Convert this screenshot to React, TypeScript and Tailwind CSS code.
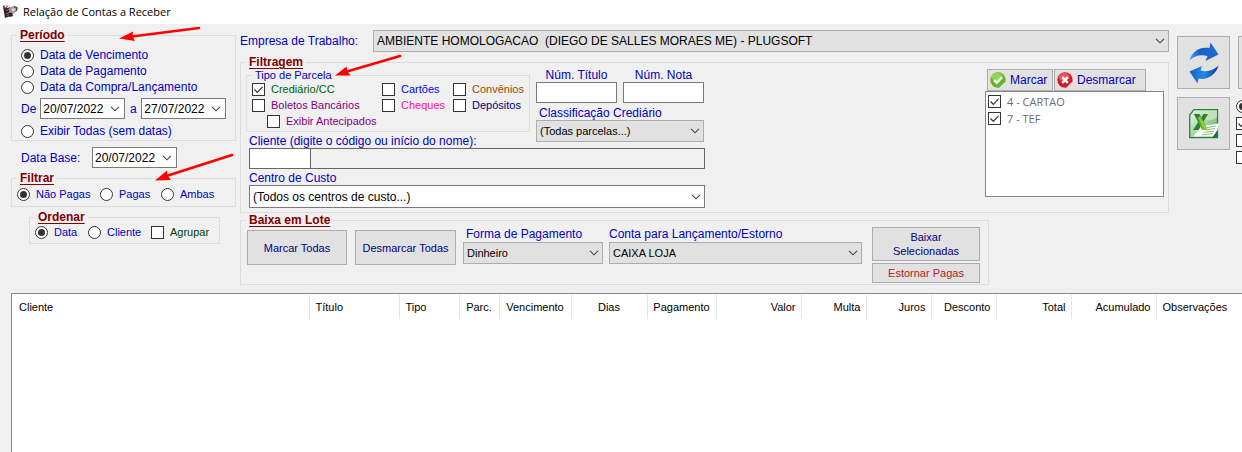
import React, { useState } from "react";

interface ToggleProps {
  label: string;
  checked?: boolean;
  name?: string;
  className?: string;
  hideLabel?: boolean;
}

interface SelectProps {
  id: string;
  value: string;
  className?: string;
  label?: string;
}

const Chevron = () => (
  <svg
    viewBox="0 0 10 6"
    className="pointer-events-none absolute right-1 top-1/2 h-1.5 w-2.5 -translate-y-1/2"
    fill="none"
    stroke="#444"
    strokeWidth="1.1"
  >
    <path d="M1 .8l4 4 4-4" />
  </svg>
);

const Radio = ({ label, checked, name, className = "", hideLabel }: ToggleProps) => (
  <label className={`flex items-center gap-1.5 whitespace-nowrap ${className}`}>
    <span className="relative size-[13px] shrink-0">
      <input
        type="radio"
        name={name}
        defaultChecked={checked}
        aria-label={hideLabel ? label : undefined}
        className="peer block size-[13px] appearance-none rounded-full border border-[#333] bg-white"
      />
      <span className="pointer-events-none absolute inset-[3px] hidden rounded-full bg-[#333] peer-checked:block" />
    </span>
    {!hideLabel && label}
  </label>
);

const Check = ({ label, checked, className = "", hideLabel }: ToggleProps) => (
  <label className={`flex items-center gap-1.5 whitespace-nowrap ${className}`}>
    <span className="relative size-[13px] shrink-0">
      <input
        type="checkbox"
        defaultChecked={checked}
        aria-label={hideLabel ? label : undefined}
        className="peer block size-[13px] appearance-none border border-[#333] bg-white"
      />
      <svg
        viewBox="0 0 13 13"
        className="pointer-events-none absolute inset-0 hidden size-[13px] peer-checked:block"
        fill="none"
        stroke="#333"
        strokeWidth="1.2"
      >
        <path d="M2.5 6.5l2.8 2.8 5.2-5.4" />
      </svg>
    </span>
    {!hideLabel && label}
  </label>
);

const Select = ({ id, value, className = "", label }: SelectProps) => (
  <div className={`relative ${className}`}>
    <select
      id={id}
      aria-label={label}
      className="block size-full appearance-none border border-inherit bg-inherit pl-[3px] pr-5 text-black"
    >
      <option>{value}</option>
    </select>
    <Chevron />
  </div>
);

const DateField = ({ value, label }: { value: string; label: string }) => {
  const [date, setDate] = useState(value);
  return (
    <div className="relative h-[21px] w-[85px] border border-[#7a7a7a] bg-white">
      <input
        type="text"
        aria-label={label}
        value={date}
        onChange={(e) => setDate(e.target.value)}
        className="block h-full w-[64px] pl-0.5 text-xs text-black"
      />
      <button type="button" aria-label="Abrir calendário" className="absolute inset-y-0 right-0 w-[18px]">
        <Chevron />
      </button>
    </div>
  );
};

const Group = ({
  title,
  className = "",
  children,
}: {
  title: string;
  className?: string;
  children: React.ReactNode;
}) => (
  <fieldset className={`min-w-0 border border-[#dcdcdc] ${className}`}>
    <legend className="ml-[5px] px-[3px] text-xs font-bold leading-[14px] text-[#800000] underline underline-offset-2">
      {title}
    </legend>
    {children}
  </fieldset>
);

const Arrows = () => (
  <svg
    aria-hidden="true"
    viewBox="0 0 420 200"
    className="pointer-events-none absolute left-0 top-0 h-[200px] w-[420px]"
    fill="#f00"
    stroke="#f00"
    strokeLinecap="round"
  >
    <g strokeWidth="2.6">
      <path d="M199 28L132 36.500M400 56L347 71.500M232 155L168 175.500" />
    </g>
    <g stroke="none">
      <path d="M119 38.500L133 31.500 132.500 36.500 135 41z" />
      <path d="M335 75.500L346.500 66.500 347.500 71.500 350.500 75.500z" />
      <path d="M155 180.500L167 170.500 167.500 175.500 171 180z" />
    </g>
  </svg>
);

const AppIcon = () => (
  <svg viewBox="0 0 16 14" className="h-3.5 w-4">
    <path d="M0 1l5 2 2-1 1 9-6 2z" fill="#2b2528" />
    <path d="M1 2l3 1M3 6l3-2M3 9l4-2M4 11l3-2" stroke="#8b7d82" />
    <path d="M6 3l5-2 4 1-1 4-3 2-3 2-2-2z" fill="#9c8d92" />
    <path d="M6 8l3 0 1 3-3 1z" fill="#201a1d" />
    <path d="M8 4l3-1 2 2-3 2z" fill="#ddd0d4" />
    <path d="M11 1.500l3 1.500-1 3" fill="none" stroke="#3d3337" />
    <path d="M1 0v4M3 1l2 .5" stroke="#d32033" />
  </svg>
);

const BadgeIcon = ({ ok }: { ok?: boolean }) => (
  <svg viewBox="0 0 16 16" className="size-4 shrink-0">
    <circle cx="8" cy="8" r="7.700" fill={ok ? "#62b52c" : "#cf2028"} />
    <ellipse cx="7" cy="5" rx="5.500" ry="4" fill={ok ? "#8fd452" : "#ea5559"} />
    <path d="M9.500 15.500l5.500-5.500.5 1.500-4.500 4.500z" fill="#e8e8e8" />
    {ok ? (
      <path d="M4 8.200l2.800 2.700L12 5.300" fill="none" stroke="#fff" strokeWidth="2.400" />
    ) : (
      <path d="M5.200 5.200l5.600 5.600M10.800 5.200l-5.600 5.600" stroke="#fff" strokeWidth="2.600" />
    )}
  </svg>
);

const RefreshIcon = () => (
  <svg viewBox="0 0 30 42" className="h-[42px] w-[30px]">
    <defs>
      <linearGradient id="blueTop" x1="0" x2="1">
        <stop offset="0" stopColor="#49a8ea" />
        <stop offset=".35" stopColor="#1761c6" />
        <stop offset="1" stopColor="#1f6bd0" />
      </linearGradient>
      <linearGradient id="blueBottom" x1="0" x2="1">
        <stop offset="0" stopColor="#1560c8" />
        <stop offset=".5" stopColor="#2489e6" />
        <stop offset="1" stopColor="#123a94" />
      </linearGradient>
    </defs>
    <path d="M.5 18.500C3 9 11 4.500 20.500 6L21.500.5 29.500 12.500 16.500 19 18.500 14C11 12 5 14 .5 18.500z" fill="url(#blueTop)" />
    <path d="M29.500 23.500C27 33 18 38.500 9.500 36.500L8.500 41.500.5 29.500 13 24 11.500 28.500C18 30.500 25 28 29.500 23.500z" fill="url(#blueBottom)" />
  </svg>
);

const ExcelIcon = () => (
  <svg viewBox="0 0 30 30" className="size-[30px]">
    <defs>
      <linearGradient id="sheet" x1="0" y1="0" x2="1" y2="1">
        <stop offset="0" stopColor="#f0faed" />
        <stop offset=".5" stopColor="#a5d6a3" />
        <stop offset="1" stopColor="#4ba75b" />
      </linearGradient>
      <linearGradient id="cross" x1="0" y1="0" x2="1" y2="1">
        <stop offset="0" stopColor="#1b6b32" />
        <stop offset="1" stopColor="#8ccc34" />
      </linearGradient>
    </defs>
    <path d="M5 .7h23.500v28H.7V6z" fill="url(#sheet)" stroke="#2b8541" strokeWidth="1.300" />
    <path d="M16 1.500h12v7C22 12 16 12 12 8z" fill="#c5e6c1" opacity=".8" />
    <path d="M13 17l17-2.500-3 13H4z" fill="#fff" />
    <path d="M18 18.500l9-1.500M17 21l9-1.500M15 23.500l10-1.500M13 26l11-1.500" stroke="#86bd85" strokeWidth="1.200" />
    <path d="M14.500 5H19L9.500 21H4z" fill="#27803b" />
    <path d="M5 5h5.500l8.500 16h-6z" fill="url(#cross)" />
    <path d="M9 9l2-2 7 13-3 .5z" fill="#8ccc34" />
    <path d="M23 29h5.500v-8z" fill="#167038" />
  </svg>
);

const columns = [
  { title: "Cliente", style: "w-[297px] pl-[7px] text-left" },
  { title: "Título", style: "w-[90px] pl-1.5 text-left" },
  { title: "Tipo", style: "w-[60px] pl-1.5 text-left" },
  { title: "Parc.", style: "w-[40px] px-0 text-center" },
  { title: "Vencimento", style: "w-[72px] px-0 text-center" },
  { title: "Dias", style: "w-[76px] px-0 text-center" },
  { title: "Pagamento", style: "w-[69px] px-0 text-center" },
  { title: "Valor", style: "w-[85px] pr-[5px] text-right" },
  { title: "Multa", style: "w-[65px] pr-[5px] text-right" },
  { title: "Juros", style: "w-[65px] pr-[5px] text-right" },
  { title: "Desconto", style: "w-[65px] pr-[5px] text-right" },
  { title: "Total", style: "w-[75px] pr-[5px] text-right" },
  { title: "Acumulado", style: "w-[85px] pr-[5px] text-right" },
  { title: "Observações", style: "pl-1.5 text-left" },
];

const btn = "border border-[#adadad] bg-[#e1e1e1]";

const Sidebar = () => (
  <aside className="flex w-[225px] shrink-0 flex-col pt-1">
    <Group title="Período">
      <div className="flex flex-col pb-px pl-[9px] pt-[5px]">
        <Radio name="periodo" label="Data de Vencimento" checked className="h-4" />
        <Radio name="periodo" label="Data de Pagamento" className="h-4" />
        <Radio name="periodo" label="Data da Compra/Lançamento" className="h-4" />
        <div className="flex items-center gap-1 pb-1 pt-[3px]">
          De
          <DateField value="20/07/2022" label="Data inicial" />
          <span className="w-2 text-center">a</span>
          <DateField value="27/07/2022" label="Data final" />
        </div>
        <Radio name="periodo" label="Exibir Todas (sem datas)" className="h-4" />
      </div>
    </Group>
    <div className="mt-1.5 flex items-center gap-2 pl-2.5">
      <span className="w-[63px]">Data Base:</span>
      <DateField value="20/07/2022" label="Data Base" />
    </div>
    <Group title="Filtrar" className="mt-[3px]">
      <div className="grid grid-cols-[83px_61px_1fr] pb-[5px] pl-[5px] pt-0.5 text-[11px] leading-[14px]">
        <Radio name="filtrar" label="Não Pagas" checked />
        <Radio name="filtrar" label="Pagas" />
        <Radio name="filtrar" label="Ambas" />
      </div>
    </Group>
    <Group title="Ordenar" className="ml-[18px] mr-4 mt-[3px]">
      <div className="grid grid-cols-[53px_63px_1fr] pb-1 pl-[5px] pt-px text-[11px] leading-[14px]">
        <Radio name="ordenar" label="Data" checked />
        <Radio name="ordenar" label="Cliente" />
        <Check label="Agrupar" className="text-[#004000]" />
      </div>
    </Group>
  </aside>
);

const Filters = () => (
  <Group title="Filtragem" className="mt-[3px]">
    <div className="flex items-start justify-between pl-[5px] pr-1">
      <div className="w-[459px] shrink-0 pb-1">
        <div className="flex gap-1.5">
          <div className="w-[284px]">
            <fieldset className="min-w-0 border border-[#dcdcdc]">
              <legend className="ml-[5px] px-[3px] text-[11px] leading-3">Tipo de Parcela</legend>
              <div className="grid auto-rows-[16px] grid-cols-[130px_71px_1fr] items-center pb-0.5 pl-[5px] text-[11px]">
                <Check label="Crediário/CC" checked className="text-[#006000]" />
                <Check label="Cartões" className="text-[#0000ff]" />
                <Check label="Convênios" className="text-[#964b00]" />
                <Check label="Boletos Bancários" className="text-[#800080]" />
                <Check label="Cheques" className="text-[#ff1493]" />
                <Check label="Depósitos" className="text-[#000080]" />
                <Check label="Exibir Antecipados" className="pl-[15px] text-[#800080]" />
              </div>
            </fieldset>
            <label htmlFor="cliente" className="mt-0.5 block pl-[3px]">
              Cliente (digite o código ou início do nome):
            </label>
          </div>
          <div className="w-[168px]">
            <div className="flex gap-1.5">
              <div className="flex-1">
                <label htmlFor="titulo" className="block text-center leading-[13px]">Núm. Título</label>
                <input id="titulo" type="text" className="block h-[21px] w-full border border-[#7a7a7a] bg-white px-1" />
              </div>
              <div className="flex-1">
                <label htmlFor="nota" className="block text-center leading-[13px]">Núm. Nota</label>
                <input id="nota" type="text" className="block h-[21px] w-full border border-[#7a7a7a] bg-white px-1" />
              </div>
            </div>
            <label htmlFor="classificacao" className="mt-[3px] block pl-[3px]">Classificação Crediário</label>
            <Select
              id="classificacao"
              value="(Todas parcelas...)"
              className="h-[22px] border-[#adadad] bg-[#e1e1e1] text-[11px]"
            />
          </div>
        </div>
        <div className="flex pl-[3px]">
          <input id="cliente" type="text" className="h-[21px] w-[62px] border border-[#666] bg-white px-1" />
          <input
            type="text"
            readOnly
            aria-label="Nome do cliente"
            className="h-[21px] min-w-0 flex-1 border border-l-0 border-[#666] px-1"
          />
        </div>
        <label htmlFor="centro" className="mt-0.5 block pl-[3px]">Centro de Custo</label>
        <Select id="centro" value="(Todos os centros de custo...)" className="ml-[3px] h-[23px] border-[#7a7a7a] bg-white text-xs" />
      </div>
      <div className="w-[179px] shrink-0">
        <div className="flex gap-px pl-0.5">
          <button type="button" className={`flex h-[22px] w-[66px] items-center gap-1 pl-0.5 ${btn}`}>
            <BadgeIcon ok />
            Marcar
          </button>
          <button type="button" className={`flex h-[22px] w-[92px] items-center gap-1 pl-0.5 ${btn}`}>
            <BadgeIcon />
            Desmarcar
          </button>
        </div>
        <div className="h-[106px] border border-[#828790] bg-white pl-0.5 pt-px font-['Open_Sans',sans-serif] text-[11px] text-[#6d6d6d]">
          <Check label="4 - CARTAO" checked className="h-[17px]" />
          <Check label="7 - TEF" checked className="h-[17px]" />
        </div>
      </div>
    </div>
  </Group>
);

const Batch = () => (
  <Group title="Baixa em Lote" className="w-[749px]">
    <div className="flex items-start pl-1.5 pr-2 text-[11px]">
      <button type="button" className={`mt-[3px] h-[35px] w-[100px] text-[#000080] ${btn}`}>
        Marcar Todas
      </button>
      <button type="button" className={`ml-2 mt-[3px] h-[35px] w-[101px] text-[#000080] ${btn}`}>
        Desmarcar Todas
      </button>
      <div className="ml-[7px] w-[140px]">
        <label htmlFor="forma" className="block pb-px pl-[3px] text-xs leading-[14px]">Forma de Pagamento</label>
        <Select id="forma" value="Dinheiro" className="h-[22px] border-[#adadad] bg-[#e1e1e1]" />
      </div>
      <div className="ml-1.5 flex-1">
        <label htmlFor="conta" className="block pb-px text-xs leading-[14px]">Conta para Lançamento/Estorno</label>
        <Select id="conta" value="CAIXA LOJA" className="h-[22px] border-[#adadad] bg-[#e1e1e1]" />
      </div>
      <div className="ml-2.5 flex w-[108px] flex-col gap-0.5 pb-px">
        <button type="button" className={`h-[34px] px-4 text-[#000080] ${btn}`}>Baixar Selecionadas</button>
        <button type="button" className={`h-5 text-[#b22222] ${btn}`}>Estornar Pagas</button>
      </div>
    </div>
  </Group>
);

const Toolbar = () => (
  <div className="flex w-[65px] shrink-0 overflow-hidden pt-3">
    <div className="flex shrink-0 flex-col gap-2">
      <button type="button" aria-label="Atualizar" className={`grid size-[53px] place-items-center ${btn}`}>
        <RefreshIcon />
      </button>
      <button type="button" aria-label="Exportar para Excel" className={`grid size-[53px] place-items-center ${btn}`}>
        <ExcelIcon />
      </button>
    </div>
    <div className="ml-1.5 w-[60px] shrink-0">
      <button type="button" aria-label="Imprimir" className={`mb-[9px] ml-0.5 block size-[53px] ${btn}`} />
      <Radio name="saida" label="Saída" checked hideLabel className="h-[17px]" />
      <Check label="Detalhar" checked hideLabel className="h-[17px]" />
      <Check label="Totalizar" hideLabel className="h-[17px]" />
      <Check label="Resumir" hideLabel className="h-[17px]" />
    </div>
  </div>
);

const App = () => {
  return (
    <div className="relative flex min-h-screen flex-col overflow-hidden bg-[#f0f0f0] font-['Liberation_Sans',Arial,sans-serif] text-xs leading-[14px] text-[#0000c0]">
      <header className="flex h-6 items-center gap-1 bg-white pl-[3px] font-['Open_Sans',sans-serif] text-[11px] text-black">
        <AppIcon />
        <h1>Relação de Contas a Receber</h1>
      </header>

      <div className="flex pl-[11px]">
        <Sidebar />
        <main className="ml-1 mr-2 min-w-0 flex-1 pt-1.5">
          <div className="flex items-center gap-2.5">
            <label htmlFor="empresa" className="w-[123px]">Empresa de Trabalho:</label>
            <Select
              id="empresa"
              value="AMBIENTE HOMOLOGACAO&nbsp; (DIEGO DE SALLES MORAES ME) - PLUGSOFT"
              className="h-[22px] flex-1 border-[#adadad] bg-[#e1e1e1]"
            />
          </div>
          <Filters />
          <Batch />
        </main>
        <Toolbar />
      </div>

      <div className="ml-[11px] mt-2 flex-1 border-l border-t border-[#828790] bg-white pt-px">
        <table className="w-full table-fixed border-collapse text-[11px] text-black">
          <thead>
            <tr>
              {columns.map((col) => (
                <th
                  key={col.title}
                  scope="col"
                  className={`h-6 whitespace-nowrap border-r border-[#e5e5e5] font-normal last:border-r-0 ${col.style}`}
                >
                  {col.title}
                </th>
              ))}
            </tr>
          </thead>
          <tbody />
        </table>
      </div>

      <Arrows />
    </div>
  );
};

export default App;
